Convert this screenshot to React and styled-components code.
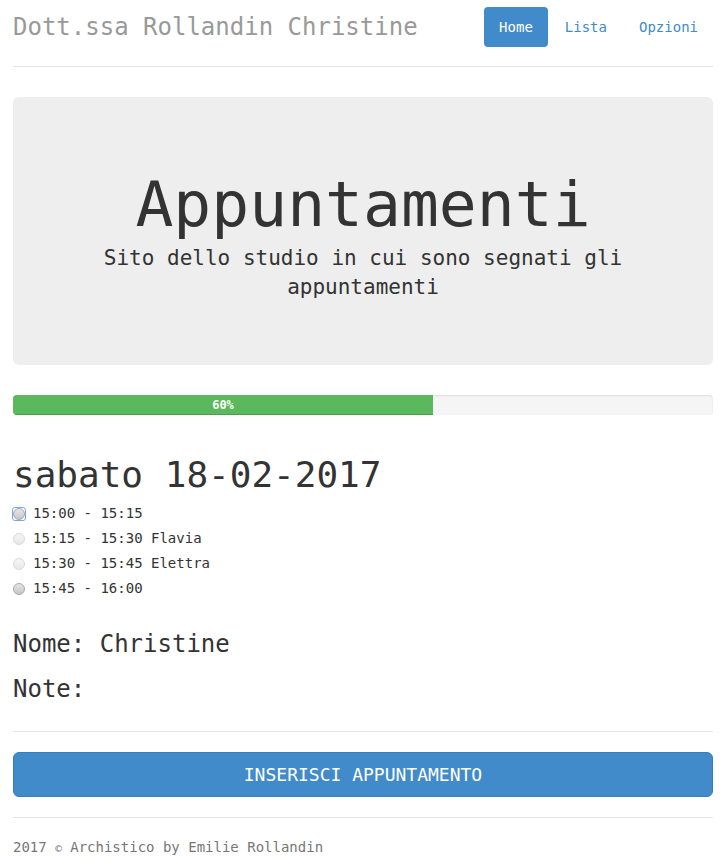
import React from 'react'
import styled, { createGlobalStyle } from 'styled-components'

const GlobalStyle = createGlobalStyle`
  * {
    box-sizing: border-box;
  }
  body {
    margin: 0;
    background: #fff;
    color: #333;
    font-family: "DejaVu Sans Mono", "Liberation Mono", monospace;
    font-size: 14px;
    line-height: 20px;
  }
`

const Page = styled.div`
  width: 728px;
  padding: 0 15px 0 13px;
`

const Header = styled.header`
  display: flex;
  justify-content: space-between;
  align-items: flex-start;
  padding: 7px 0 19px;
  border-bottom: 1px solid #e5e5e5;
`

const Brand = styled.h3`
  margin: 0;
  font-size: 24px;
  line-height: 40px;
  font-weight: 400;
  color: #999;
`

const Nav = styled.nav`
  display: flex;
  gap: 2px;
`

const Pill = styled.a`
  display: block;
  padding: 10px 15px;
  border-radius: 4px;
  font-size: 14px;
  line-height: 20px;
  text-decoration: none;
  color: ${p => (p.$active ? '#fff' : '#428bca')};
  background: ${p => (p.$active ? '#428bca' : 'transparent')};
`

const Jumbotron = styled.section`
  margin-top: 30px;
  padding: 73px 30px 63px;
  background: #eee;
  border-radius: 6px;
  text-align: center;
`

const JumboTitle = styled.h1`
  margin: 0;
  font-size: 63px;
  line-height: 69px;
  font-weight: 400;
  color: #333;
`

const Lead = styled.p`
  margin: 5px 0 0;
  font-size: 21px;
  line-height: 29px;
  font-weight: 400;
`

const Progress = styled.div`
  margin-top: 30px;
  height: 20px;
  background: #f5f5f5;
  border-radius: 4px;
  box-shadow: inset 0 1px 2px rgba(0, 0, 0, 0.1);
  overflow: hidden;
`

const ProgressBar = styled.div`
  height: 100%;
  width: ${p => p.$value}%;
  background: #5cb85c;
  box-shadow: inset 0 -1px 0 rgba(0, 0, 0, 0.15);
  color: #fff;
  font-size: 12px;
  font-weight: 700;
  line-height: 20px;
  text-align: center;
`

const DayTitle = styled.h2`
  margin: 40px 0 6px;
  font-size: 36px;
  line-height: 40px;
  font-weight: 400;
`

const SlotList = styled.div`
  display: flex;
  flex-direction: column;
`

const Slot = styled.label`
  display: flex;
  align-items: center;
  gap: 7px;
  height: 25px;
  line-height: 25px;
  font-size: 14px;
  color: #333;
`

const FocusRing = styled.span`
  flex: none;
  display: flex;
  align-items: center;
  justify-content: center;
  width: 14px;
  height: 14px;
  margin-left: -1px;
  border: 1px solid ${p => (p.$on ? '#78a6ee' : 'transparent')};
  border-radius: 3px;
`

const Radio = styled.span`
  flex: none;
  width: 12px;
  height: 12px;
  border-radius: 50%;
  border: 1px solid ${p => (p.$state === 'disabled' ? '#d9d9d9' : '#a8a8a8')};
  background: ${p =>
    p.$state === 'disabled'
      ? 'linear-gradient(#f6f6f6, #e8e8e8)'
      : 'linear-gradient(#e6e6e6, #c6c6c6)'};
`

const Field = styled.h3`
  margin: ${p => p.$top}px 0 0;
  font-size: 24px;
  line-height: 34px;
  font-weight: 400;
`

const Rule = styled.hr`
  margin: ${p => p.$top}px 0 0;
  border: 0;
  border-top: 1px solid #e5e5e5;
  height: 0;
`

const SubmitButton = styled.button`
  display: block;
  width: 100%;
  margin-top: 20px;
  padding: 10px 16px;
  font-family: inherit;
  font-size: 18px;
  line-height: 23px;
  color: #fff;
  background: #428bca;
  border: 1px solid #357ebd;
  border-radius: 6px;
  cursor: pointer;
`

const Footer = styled.footer`
  margin-top: 19px;
  color: #777;
  font-size: 14px;
  line-height: 20px;
`

const Copy = styled.span`
  font-size: 11px;
`

const slots = [
  { time: '15:00 - 15:15', name: '', state: 'focus' },
  { time: '15:15 - 15:30', name: 'Flavia', state: 'disabled' },
  { time: '15:30 - 15:45', name: 'Elettra', state: 'disabled' },
  { time: '15:45 - 16:00', name: '', state: 'normal' },
]

const App = () => (
  <Page>
    <GlobalStyle />
    <Header>
      <Brand>Dott.ssa Rollandin Christine</Brand>
      <Nav>
        <Pill $active href="#">Home</Pill>
        <Pill href="#">Lista</Pill>
        <Pill href="#">Opzioni</Pill>
      </Nav>
    </Header>

    <Jumbotron>
      <JumboTitle>Appuntamenti</JumboTitle>
      <Lead>Sito dello studio in cui sono segnati gli appuntamenti</Lead>
    </Jumbotron>

    <Progress>
      <ProgressBar $value={60}>60%</ProgressBar>
    </Progress>

    <DayTitle>sabato 18-02-2017</DayTitle>
    <SlotList>
      {slots.map(s => (
        <Slot key={s.time}>
          <FocusRing $on={s.state === 'focus'}>
            <Radio $state={s.state} />
          </FocusRing>
          {s.name ? `${s.time} ${s.name}` : s.time}
        </Slot>
      ))}
    </SlotList>

    <Field $top={26}>Nome: Christine</Field>
    <Field $top={11}>Note:</Field>

    <Rule $top={25} />
    <SubmitButton>INSERISCI APPUNTAMENTO</SubmitButton>
    <Rule $top={20} />
    <Footer>
      2017 <Copy>©</Copy> Archistico by Emilie Rollandin
    </Footer>
  </Page>
)

export default App
